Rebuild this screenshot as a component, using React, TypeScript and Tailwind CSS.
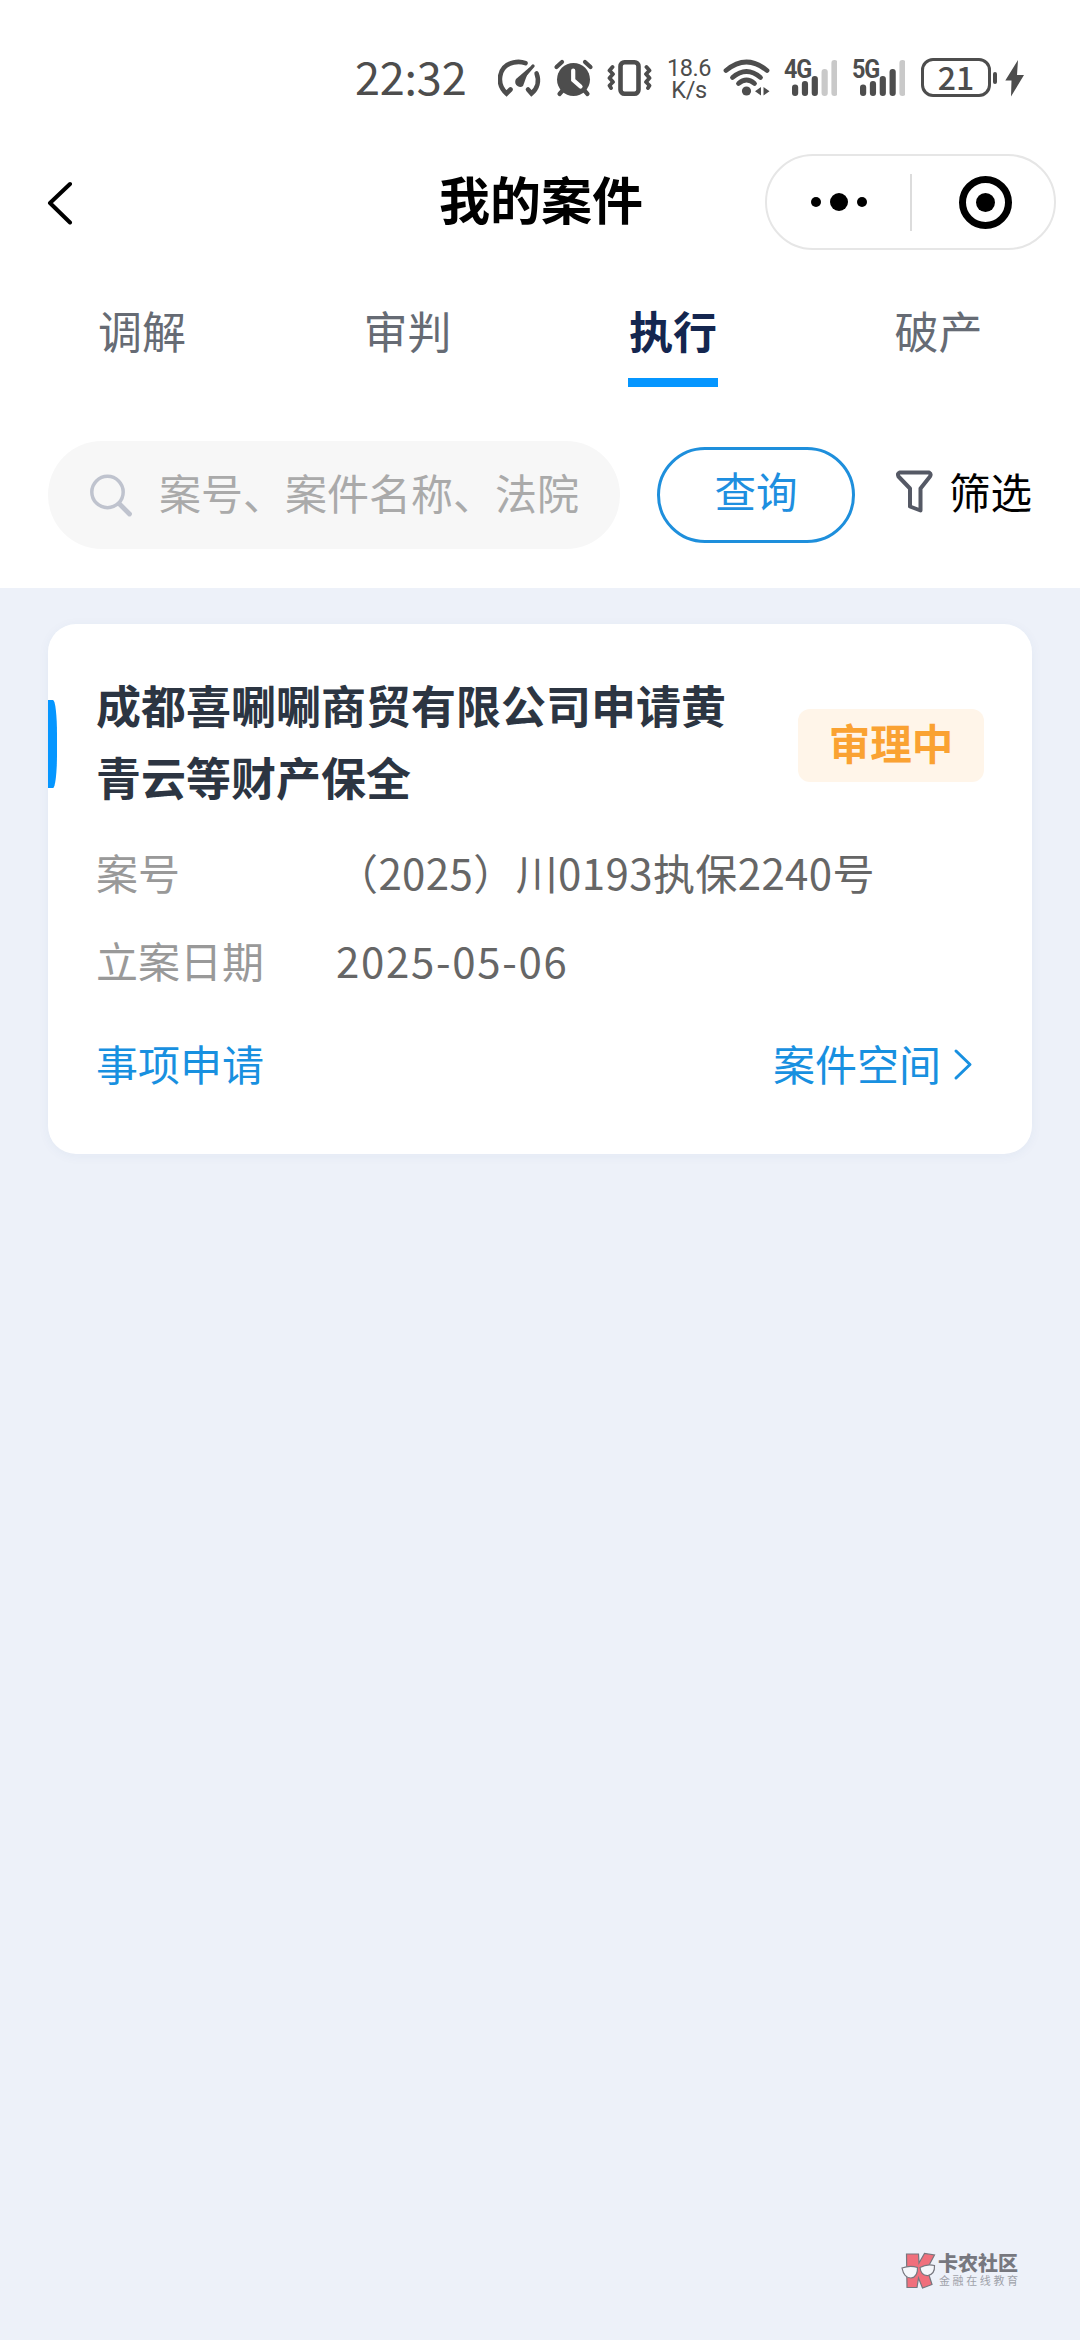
import { useState } from "react";

const tabs = ["调解", "审判", "执行", "破产"];

const cases = [
  {
    title: "成都喜唰唰商贸有限公司申请黄青云等财产保全",
    status: "审理中",
    caseNo: "（2025）川0193执保2240号",
    date: "2025-05-06",
  },
];

function SignalBars({ label, level }: { label: string; level: number }) {
  const tops = [84.5, 81, 76, 69, 60];
  return (
    <div className="relative h-[40px] w-[53px]">
      <span className="absolute left-0 top-0 origin-left scale-x-90 font-[Roboto] text-[26px] leading-[23px] font-bold tracking-[-1.2px]">
        {label}
      </span>
      <svg className="absolute inset-0" width="53" height="40" viewBox="784 58 53 40">
        {tops.map((top, i) => (
          <rect
            key={top}
            x={792 + i * 9.85}
            y={top}
            width="6.2"
            height={96 - top}
            rx="3"
            fill={i < level ? "#4d4d4d" : "#c9c9c9"}
          />
        ))}
      </svg>
    </div>
  );
}

function StatusBar() {
  return (
    <div className="flex h-[154px] items-start pl-[355px] pt-[58px] text-[#4d4d4d]">
      <span className="-mt-[2px] w-[143px] text-[45px] leading-[40px] tracking-[-0.2px]">22:32</span>
      <svg width="154" height="40" viewBox="498 58 154 40" fill="none" stroke="#4d4d4d" strokeLinecap="round">
        {/* 속도계 */}
        <g strokeWidth="4.6">
          <path d="M510.5 89.5L506.5 93.5C496 84 498 66 513.5 62.5C518 61.4 522 61.8 525.5 63.2" />
          <path d="M536.6 73.5C539.5 81 537.5 88.5 531.5 93.5L528 89.5" />
          <path d="M520 81L533 66" strokeWidth="3.4" />
        </g>
        <path d="M530 67L523 86C519 89 513 84 516 79Z" fill="#4d4d4d" stroke="none" />
        {/* 알람 */}
        <circle cx="573.5" cy="79.5" r="16.5" fill="#4d4d4d" stroke="none" />
        <path d="M556.5 67L562 62M590.5 67L585 62M563 90L559.5 94M584 90L587.5 94" strokeWidth="4.2" />
        <path d="M573.2 70.5V80L580.5 86.5" stroke="#fff" strokeWidth="4.2" />
        {/* 진동 */}
        <rect x="620.5" y="62.2" width="18" height="31.6" rx="4" strokeWidth="4.6" />
        <path
          d="M612.5 67L609.5 70.5L613 74L609.5 78L613 82L609.5 85.5L611 88M646.5 67L649.5 70.5L646 74L649.5 78L646 82L649.5 85.5L648 88"
          strokeWidth="3.8"
          strokeLinejoin="round"
        />
      </svg>
      <div className="-mt-[1px] ml-[14px] w-[46px] text-center font-[Roboto] text-[23.5px] leading-[22px] tracking-[-0.4px]">
        <div>18.6</div>
        <div>K/s</div>
      </div>
      <svg className="ml-[11px]" width="48" height="40" viewBox="723 58 48 40" fill="none" stroke="#4d4d4d">
        <path d="M726 70.5Q746.5 53.5 767 70.5" strokeWidth="4.8" strokeLinecap="round" />
        <path d="M732.5 77.5Q746.5 65.5 760.5 77.5" strokeWidth="4.8" strokeLinecap="round" />
        <path d="M738.5 83.5Q746.5 76.5 754.5 83.5" strokeWidth="4.8" strokeLinecap="round" />
        <circle cx="746.5" cy="91" r="4.6" fill="#4d4d4d" stroke="none" />
        <path d="M761 87V95.5L755 91.2ZM763.5 87V95.5L769.5 91.2Z" fill="#4d4d4d" stroke="none" />
      </svg>
      <div className="ml-[13px] flex gap-[15px]">
        <SignalBars label="4G" level={3} />
        <SignalBars label="5G" level={4} />
      </div>
      <div className="ml-[16px] flex h-[39px] w-[70px] items-center justify-center rounded-[12px] border-[3px] border-[#4d4d4d] pb-[3px] text-[32px] leading-[30px] font-medium">
        <span>21</span>
      </div>
      <div className="ml-[2px] mt-[14px] h-[12px] w-[4px] rounded-full bg-[#4d4d4d]" />
      <svg className="ml-[8px]" width="20" height="40" viewBox="1005 58 20 40" fill="#4d4d4d">
        <path d="M1018 60L1005.3 80.5H1011.5L1011 96.5L1024 75H1017Z" />
      </svg>
    </div>
  );
}

function NavBar() {
  return (
    <div className="flex h-[96px] items-center pl-[46px]">
      <button className="w-[393px]">
        <svg width="28" height="46" viewBox="46 179 28 46" fill="none" stroke="#000" strokeWidth="4">
          <path d="M70 184L50 203L70 222.5" strokeLinecap="round" strokeLinejoin="round" />
        </svg>
      </button>
      <h1 className="w-[326px] pb-[8px] text-[51px] leading-[60px] font-bold text-black">我的案件</h1>
      <div className="flex h-[96px] w-[291px] items-center rounded-full border-2 border-[#e6e6e6]">
        <div className="flex flex-1 items-center justify-center gap-[9px]">
          <i className="size-[10px] rounded-full bg-black" />
          <i className="size-[18px] rounded-full bg-black" />
          <i className="size-[10px] rounded-full bg-black" />
        </div>
        <div className="h-[57px] w-[2px] bg-[#dcdcdc]" />
        <div className="flex w-[142px] justify-center pl-[5px]">
          <div className="flex size-[53px] items-center justify-center rounded-full border-[7px] border-black">
            <i className="size-[19px] rounded-full bg-black" />
          </div>
        </div>
      </div>
    </div>
  );
}

function CaseCard({ item }: { item: (typeof cases)[number] }) {
  return (
    <div className="relative h-[530px] rounded-[28px] bg-white px-[48px] pt-[45px] shadow-[0_2px_12px_rgba(40,80,140,0.05)]">
      {/* 왼쪽 강조 바 */}
      <div className="absolute left-0 top-[76px] h-[88px] w-[9px] bg-[#0596ff] [border-radius:0_4px_4px_0/0_34px_34px_0]" />
      <div className="flex items-center justify-between">
        <h2 className="w-[632px] text-[45px] leading-[71.5px] font-bold text-[#2c3542]">{item.title}</h2>
        <span className="mt-[10px] flex h-[73px] w-[186px] items-center justify-center rounded-[12px] bg-[#fff5e9] pb-[6px] text-[41.5px] leading-none font-bold text-[#faa232]">
          {item.status}
        </span>
      </div>
      <dl className="mt-[16px] text-[42px] leading-[88px]">
        <div className="flex">
          <dt className="w-[240px] text-[#999]">案号</dt>
          <dd className="tracking-[0.4px] text-[#666]">{item.caseNo}</dd>
        </div>
        <div className="flex">
          <dt className="w-[240px] text-[#999]">立案日期</dt>
          <dd className="tracking-[1.7px] text-[#666]">{item.date}</dd>
        </div>
      </dl>
      <div className="mt-[15px] flex items-center justify-between pr-[11px] text-[42px] leading-[88px] text-[#1890e0]">
        <a>事项申请</a>
        <a className="flex items-center gap-[12px]">
          案件空间
          <svg
            className="mt-[4px]"
            width="20"
            height="34"
            viewBox="953 1050 20 34"
            fill="none"
            stroke="#1890e0"
            strokeWidth="3"
          >
            <path d="M956 1053L970 1066.5L956 1080" strokeLinecap="round" strokeLinejoin="round" />
          </svg>
        </a>
      </div>
    </div>
  );
}

function Watermark() {
  return (
    <div className="absolute left-[900px] top-[2252px] flex items-start">
      <svg width="36" height="38" viewBox="0 0 36 38" stroke="#77777f" strokeWidth="1.2">
        <path
          d="M6.5 2H18.5L19 11L24.5 1.5L34.5 3L27 17L32 32.5L22.5 36L18.5 26L17 35.5H7Z"
          fill="#f06f7c"
        />
        <path d="M2 16Q10 13 17.5 15.5Q18 25 11 26Q4 26 2 16Z" fill="#f5f7fb" />
        <path d="M20 15.5Q27 11.5 34.5 13.5Q35 22 28 23.5Q21 24 20 15.5Z" fill="#f5f7fb" />
      </svg>
      <div className="ml-[2px] pt-[1px]">
        <div className="text-[20px] leading-[20px] font-black text-[#77787f]">卡农社区</div>
        <div className="ml-[1px] mt-[1px] text-[11px] leading-[12px] tracking-[2.6px] text-[#9fa2aa]">
          金融在线教育
        </div>
      </div>
    </div>
  );
}

export default function App() {
  const [active, setActive] = useState(2);
  const [keyword, setKeyword] = useState("");

  return (
    <div className="relative h-[2340px] w-[1080px] overflow-hidden bg-[#edf1f9] font-['Noto_Sans_CJK_SC',sans-serif]">
      <div className="h-[588px] bg-white">
        <StatusBar />
        <NavBar />
        <div className="flex h-[137px] gap-[175.5px] pl-[97px]">
          {tabs.map((tab, i) => (
            <button key={tab} onClick={() => setActive(i)} className="flex w-[90px] flex-col items-center pt-[47px]">
              <span
                className={`text-[44px] leading-[66px] whitespace-nowrap ${
                  i === active ? "font-bold text-[#14264f]" : "text-[#666b74]"
                }`}
              >
                {tab}
              </span>
              {i === active && <span className="mt-[15px] h-[9px] w-[90px] bg-[#0596ff]" />}
            </button>
          ))}
        </div>
        <div className="mt-[54px] flex h-[108px] items-center pl-[48px]">
          <div className="flex h-[108px] w-[572px] items-center rounded-full bg-[#f7f7f7] pl-[41px]">
            <svg width="45" height="45" viewBox="89 472 45 45" fill="none" stroke="#bfc3ce" strokeLinecap="round">
              <circle cx="107.5" cy="491" r="15.7" strokeWidth="3.5" />
              <path d="M119.5 503L129.5 513" strokeWidth="4.8" />
            </svg>
            <input
              value={keyword}
              onChange={(e) => setKeyword(e.target.value)}
              placeholder="案号、案件名称、法院"
              className="mb-[8px] ml-[25px] h-[64px] w-[430px] text-[42px] outline-none placeholder:text-[#aaa]"
            />
          </div>
          <button className="ml-[37px] flex h-[96px] w-[198px] items-center justify-center rounded-full border-[3px] border-[#1e8fdc] pb-[8px] text-[41.5px] leading-none text-[#1e8fe0]">
            查询
          </button>
          <button className="ml-[40px] flex items-center pb-[9px] text-[41.5px] leading-[60px] text-black">
            <svg width="38" height="44" viewBox="894 467 38 44" fill="none" stroke="#555965" strokeWidth="4">
              <path
                d="M898.5 470.5H928Q930.5 472 929 474.5L919.5 486.5V508.5L909 504.5V486.5L897.5 474.5Q896 471.5 898.5 470.5Z"
                strokeLinejoin="round"
              />
            </svg>
            <span className="ml-[16px]">筛选</span>
          </button>
        </div>
      </div>
      <div className="px-[48px] pt-[36px]">
        {cases.map((item) => (
          <CaseCard key={item.caseNo} item={item} />
        ))}
      </div>
      <Watermark />
    </div>
  );
}
